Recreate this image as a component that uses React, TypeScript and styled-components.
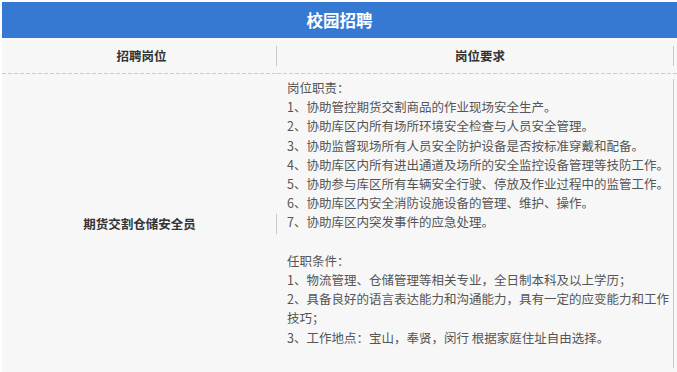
import styled, { createGlobalStyle, css } from "styled-components";

const GlobalStyle = createGlobalStyle`
  body {
    margin: 0;
    background: #ffffff;
    font-family: "Noto Sans CJK SC", "Noto Sans", sans-serif;
  }
`;

const duties = [
  "岗位职责：",
  "1、协助管控期货交割商品的作业现场安全生产。",
  "2、协助库区内所有场所环境安全检查与人员安全管理。",
  "3、协助监督现场所有人员安全防护设备是否按标准穿戴和配备。",
  "4、协助库区内所有进出通道及场所的安全监控设备管理等技防工作。",
  "5、协助参与库区所有车辆安全行驶、停放及作业过程中的监管工作。",
  "6、协助库区内安全消防设施设备的管理、维护、操作。",
  "7、协助库区内突发事件的应急处理。",
  "",
  "任职条件：",
  "1、物流管理、仓储管理等相关专业，全日制本科及以上学历；",
  "2、具备良好的语言表达能力和沟通能力，具有一定的应变能力和工作技巧；",
  "3、工作地点：宝山，奉贤，闵行 根据家庭住址自由选择。",
  "",
];

function App() {
  return (
    <>
      <GlobalStyle />
      <Page>
        <Banner>校园招聘</Banner>
        <Table>
          <HeadCell $divider="short">招聘岗位</HeadCell>
          <HeadCell $divider="short" $last $shift>
            岗位要求
          </HeadCell>
          <NameCell $divider="short">期货交割仓储安全员</NameCell>
          <DetailCell $divider="tall" $last>
            {duties.map((line, i) => (
              <Line key={i}>{line || "\u00a0"}</Line>
            ))}
          </DetailCell>
        </Table>
      </Page>
    </>
  );
}

export default App;

interface CellProps {
  $divider: "short" | "tall";
  $last?: boolean;
}

const Page = styled.div`
  padding: 2px 0 0 2px;
`;

const Banner = styled.div`
  height: 36px;
  display: flex;
  align-items: center;
  justify-content: center;
  background-color: #3679d3;
  color: #ffffff;
  font-size: 16.5px;
  font-weight: 700;
`;

const Table = styled.div`
  display: grid;
  grid-template-columns: 275px 1fr;
  background-color: #f7f7f7;
`;

const Cell = styled.div<CellProps>`
  position: relative;
  box-sizing: border-box;
  background-image: linear-gradient(to right, #cccccc 4px, transparent 4px);
  background-size: 6px 1px;
  background-repeat: repeat-x;
  background-position: left bottom;

  &::after {
    content: "";
    position: absolute;
    width: 1px;
    background-color: #c8c8c8;
    right: ${({ $last }) => ($last ? "3px" : "0")};
    ${({ $divider }) =>
      $divider === "short"
        ? css`
            top: 50%;
            height: 20px;
            margin-top: -10px;
          `
        : css`
            top: 5px;
            bottom: 5px;
          `}
  }
`;

const HeadCell = styled(Cell)<{ $shift?: boolean }>`
  height: 36px;
  padding-bottom: 1px;
  padding-left: ${({ $shift }) => ($shift ? "6px" : "4px")};
  display: flex;
  align-items: center;
  justify-content: center;
  font-size: 12.5px;
  font-weight: 700;
  color: #333333;
`;

const NameCell = styled(Cell)`
  display: flex;
  align-items: center;
  justify-content: center;
  font-size: 12.5px;
  font-weight: 700;
  color: #333333;
`;

const DetailCell = styled(Cell)`
  padding: 4px 4px 7px 10px;
  font-size: 12.5px;
  line-height: 19.2px;
  color: #555555;
`;

const Line = styled.p`
  margin: 0;
`;
